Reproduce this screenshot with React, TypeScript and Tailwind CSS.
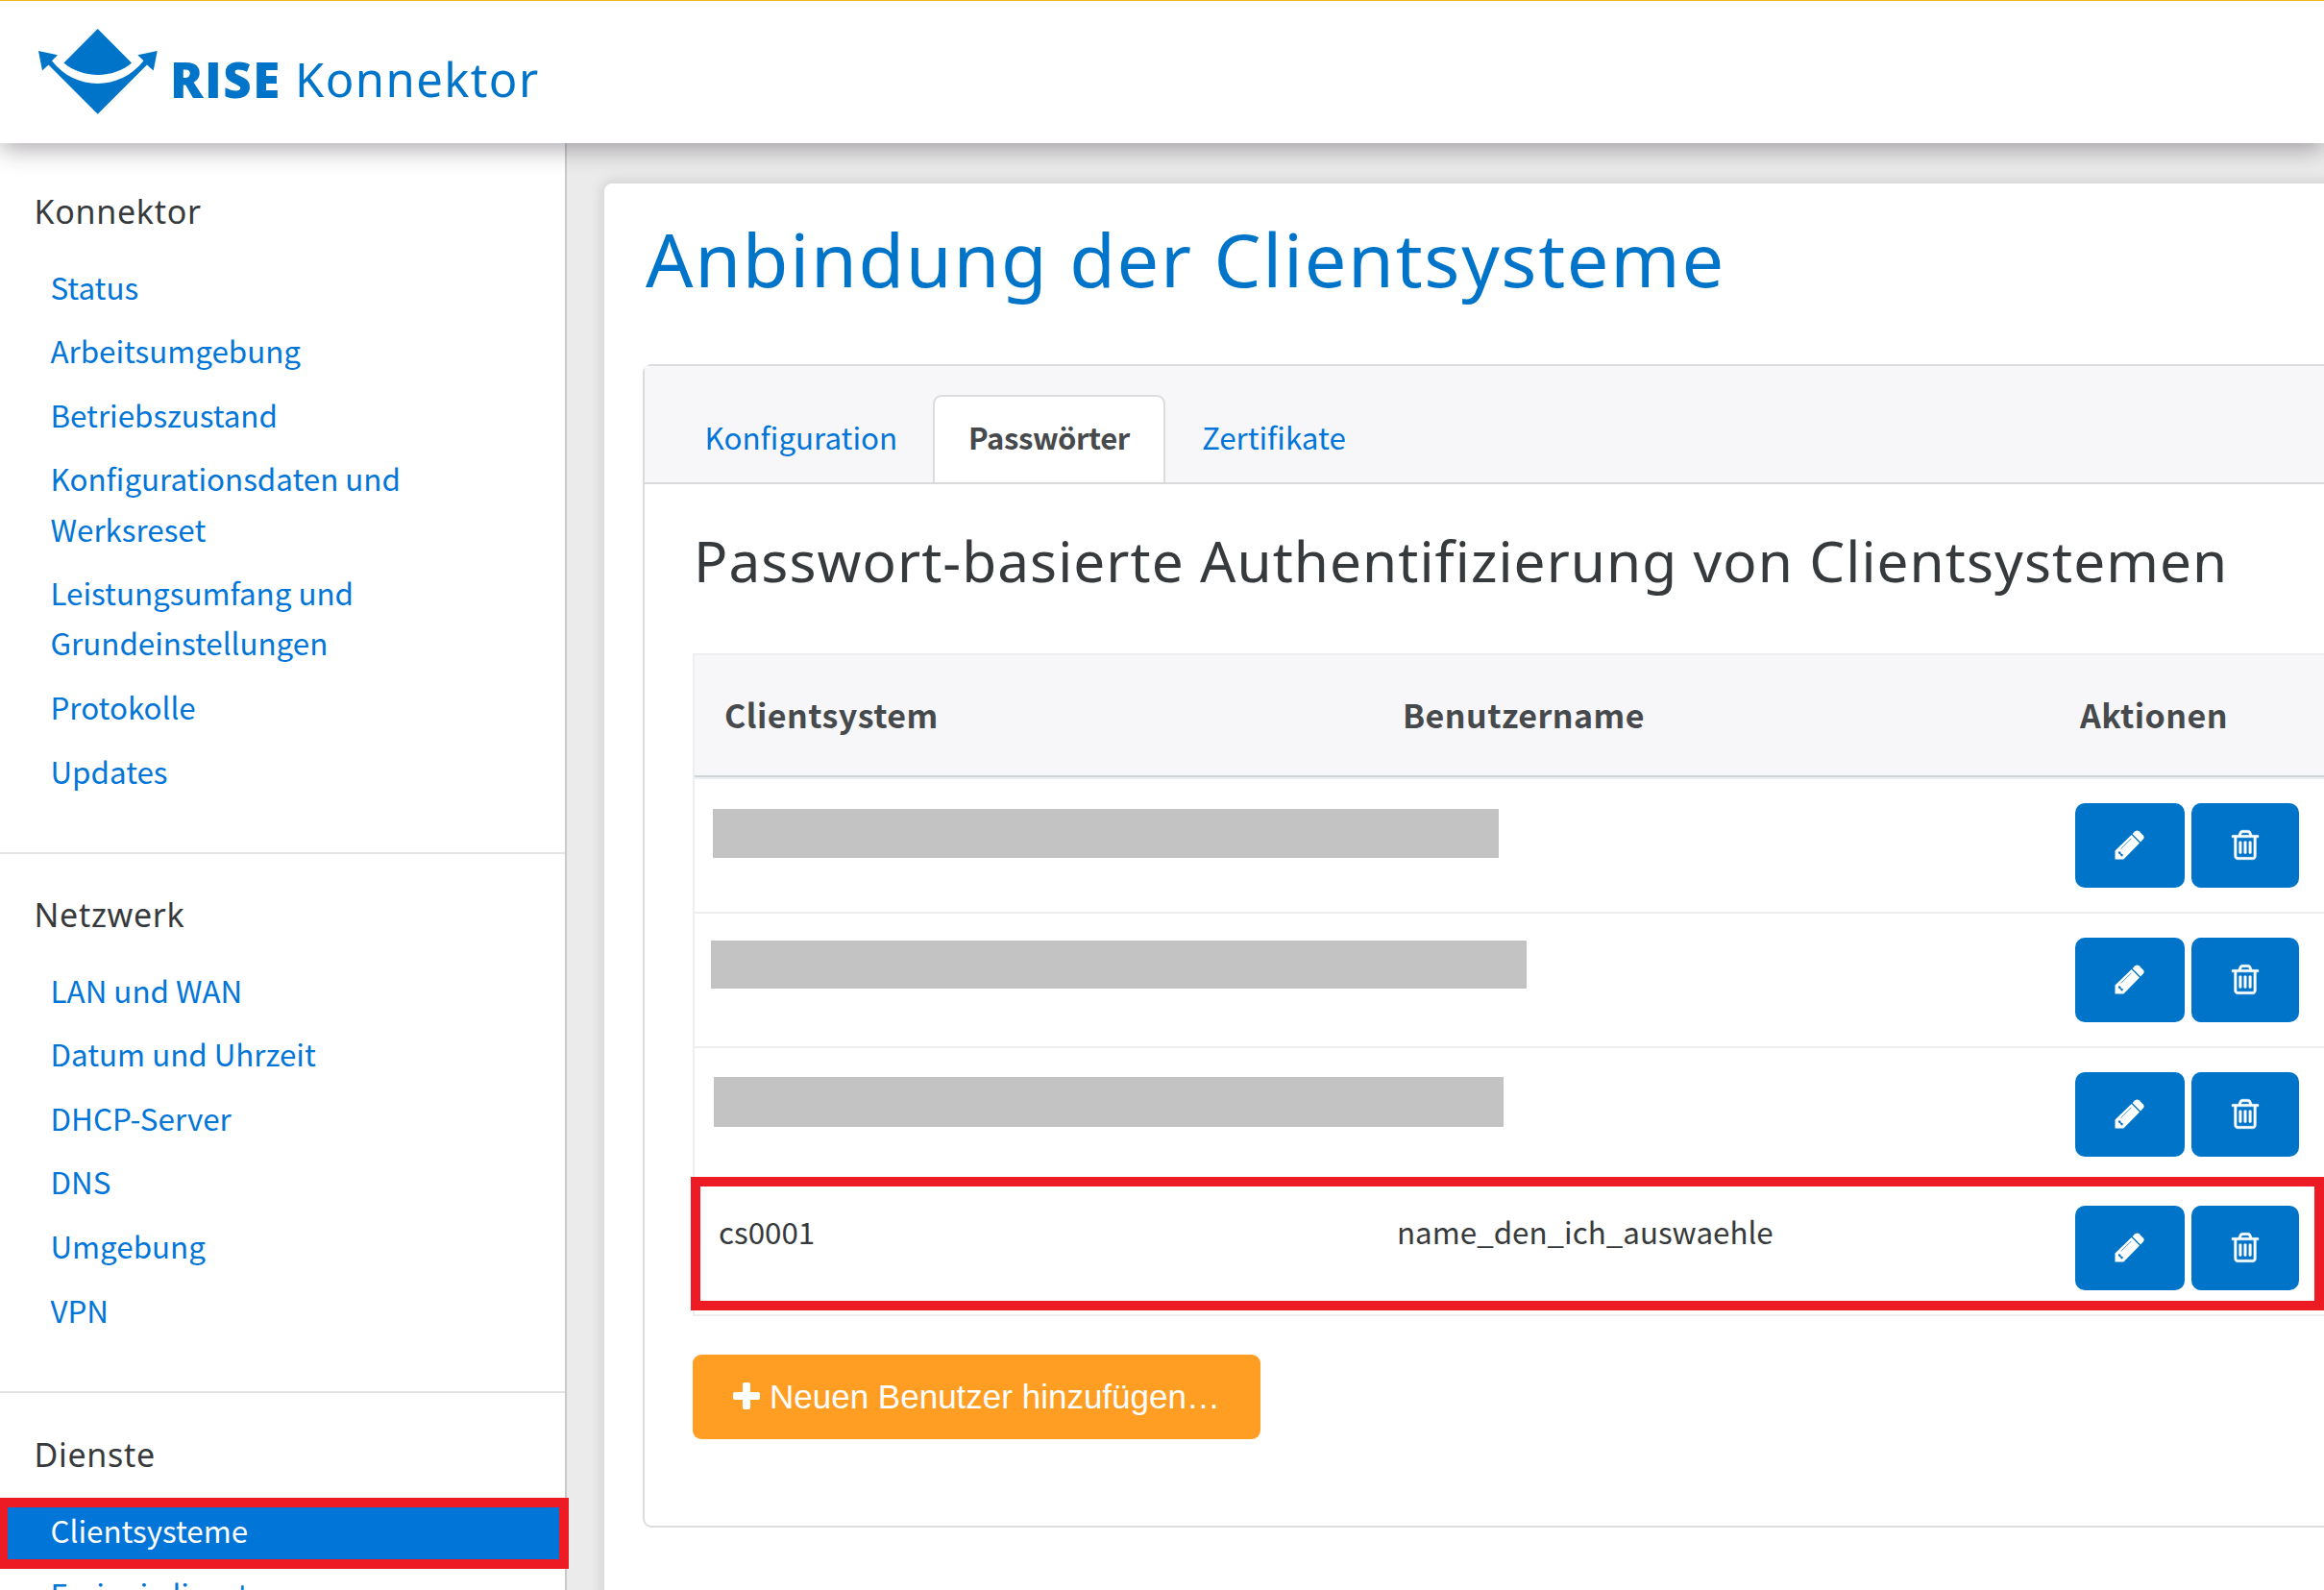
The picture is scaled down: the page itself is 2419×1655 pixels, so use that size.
import type { ReactNode } from "react";

const groups = [
  {
    title: "Konnektor",
    items: ["Status", "Arbeitsumgebung", "Betriebszustand", "Konfigurationsdaten und Werksreset", "Leistungsumfang und Grundeinstellungen", "Protokolle", "Updates"],
  },
  { title: "Netzwerk", items: ["LAN und WAN", "Datum und Uhrzeit", "DHCP-Server", "DNS", "Umgebung", "VPN"] },
  { title: "Dienste", items: ["Clientsysteme", "Ereignisdienst"] },
];

const body = "font-['Noto_Sans_CJK_SC',sans-serif]";
const round = "font-['Noto_Sans',sans-serif]";

function Logo() {
  return (
    <svg className="block h-[92px] w-[128px] shrink-0" viewBox="38 28 128 92" fill="#0074c8">
      <path d="M101.7 30 L137 65.500 C118 82 86 82 66.400 65.500 Z" />
      <path d="M40 53 L60 57.300 L54 63.300 C78 94.800 125 94.800 149.500 63.300 L143.300 57.300 L163.700 53 L159.700 73.500 L153 67.500 L101.7 118.700 L50.500 67.500 L44 73.500 Z" />
    </svg>
  );
}

function Trash() {
  return (
    <svg className="mb-[1px] h-[31px] w-[28px] overflow-visible" viewBox="0 0 1408 1536" fill="white" stroke="white" strokeWidth="20">
      <path d="M512 608v576q0 14-9 23t-23 9h-64q-14 0-23-9t-9-23V608q0-14 9-23t23-9h64q14 0 23 9t9 23zm256 0v576q0 14-9 23t-23 9h-64q-14 0-23-9t-9-23V608q0-14 9-23t23-9h64q14 0 23 9t9 23zm256 0v576q0 14-9 23t-23 9h-64q-14 0-23-9t-9-23V608q0-14 9-23t23-9h64q14 0 23 9t9 23zm128 724V384H256v948q0 22 7 40.500t14.500 27 10.500 8.500h832q3 0 10.500-8.500t14.500-27 7-40.500zM480 256h448l-48-117q-7-9-17-11H546q-10 2-17 11zm928 32v64q0 14-9 23t-23 9h-96v948q0 83-47 143.500t-113 60.500H288q-66 0-113-58.500T128 1336V384H32q-14 0-23-9t-9-23v-64q0-14 9-23t23-9h309l70-167q15-37 54-63t79-26h320q40 0 79 26t54 63l70 167h309q14 0 23 9t9 23z" />
    </svg>
  );
}

function Pencil() {
  return (
    <svg className="mb-[1px] mr-[1px] h-[31px] w-[31px]" viewBox="0 0 31 31">
      <path d="M17.600 5 L26 13.400 L9.400 30.500 H0.500 V21.500 Z" fill="white" />
      <path d="M18.600 4 L21.500 1.300 Q23.500 -0.300 25.500 1.300 L29.800 5.600 Q31.500 7.500 29.800 9.600 L27 12.400 Z" fill="white" />
      <path d="M17.500 8.700 L6.700 19.500" stroke="#0074c8" strokeWidth="0.700" fill="none" />
      <path d="M4 22.300 L6.400 22.800 L6.600 24.600 L8.800 25.300 L8.500 27 L7 27.600 L6 25.600 L4 24.300 Z" fill="#0074c8" />
    </svg>
  );
}

function Row({ children, user, height }: { children: ReactNode; user?: string; height: string }) {
  return (
    <div className={"grid grid-cols-[706px_731px_1fr] border-b-2 border-[#eceeef] " + height}>
      <div>{children}</div>
      <div className="pl-[25px] pt-[26px] text-[31.350px] leading-[52px]">{user}</div>
      <div className="flex gap-[7px] pt-[25px]">
        <button className="flex h-[88px] w-[114px] items-center justify-center rounded-[10px] bg-[#0074c8]"><Pencil /></button>
        <button className="flex h-[88px] w-[112px] items-center justify-center rounded-[10px] bg-[#0074c8]"><Trash /></button>
      </div>
    </div>
  );
}

export default function App() {
  return (
    <div className={"h-[1655px] w-[2419px] overflow-hidden bg-[#ebebeb] text-[#373a3c] " + body}>
      <header className="relative z-10 flex h-[149px] items-start border-t border-[#f0b41c] bg-white pl-[38px] shadow-[0_6px_24px_-1px_rgba(45,35,45,0.42)]">
        <div className="pt-[27px]"><Logo /></div>
        <div className="flex pl-[11px] pt-[46px] leading-[70px] text-[#0074c8]">
          <span className="w-[130px] font-['Open_Sans'] text-[51px] font-extrabold tracking-[1.500px]">RISE</span>
          <span className={"text-[49px] tracking-[1.400px] " + round}>Konnektor</span>
        </div>
      </header>
      <div className="flex">
        <aside className="h-[1506px] w-[590px] shrink-0 border-r-2 border-[#c8cacc] bg-white">
          {groups.map((g, i) => (
            <section key={g.title} className={i === 0 ? "h-[740px] border-b-2 border-[#e3e4e5] pt-[42px]" : i === 1 ? "h-[561px] border-b-2 border-[#e3e4e5] pt-[34px]" : "pt-[35px]"}>
              <h2 className={"h-[74.500px] pl-[35.500px] pt-px text-[34px] leading-[56px] tracking-[0.700px] " + round}>{g.title}</h2>
              <ul className="text-[31.350px] leading-[52.200px] text-[#0275d8]">
                {g.items.map((item) =>
                  item === "Clientsysteme" ? (
                    <li key={item} className="relative bg-[#0275d8] py-[7.200px] pl-[52.500px] text-white">
                      {item}
                      <div className="absolute -top-[0.500px] left-0 h-[74px] w-[592px] border-[10px] border-l-[8px] border-[#ed1c24]" />
                    </li>
                  ) : (
                    <li key={item} className="py-[7.200px] pl-[52.500px] pr-[120px]">{item}</li>
                  ),
                )}
              </ul>
            </section>
          ))}
        </aside>
        <main className="min-w-0 flex-1 pl-[37px] pt-[40px]">
          <div className="h-[1500px] w-[1840px] rounded-[10px] border-2 border-[#dcdcdc] bg-white pl-[40px] shadow-[0_0_14px_rgba(0,0,0,0.13)]">
            <h1 className={"h-[188px] pl-[3px] pt-[23px] text-[77.500px] leading-[110px] tracking-[1.700px] text-[#0074c8] " + round}>Anbindung der Clientsysteme</h1>
            <div className="h-[1211px] rounded-[9px] border-2 border-[#dcdcdd]">
              <div className="flex h-[123px] items-end border-b-2 border-[#d8d9da] bg-[#f7f7f9] pl-[62.500px] text-[31.350px] text-[#0275d8]">
                <span className="h-[91px] w-[237.500px] pt-[18px] leading-[52px]">Konfiguration</span>
                <span className="flex h-[91px] w-[242px] justify-center rounded-t-[9px] border-2 border-b-0 border-[#dcdcdd] bg-white pt-[16px] text-[31px] font-bold leading-[52px] tracking-[-0.400px] text-[#464a4c]">Passwörter</span>
                <span className="h-[91px] pl-[38px] pt-[18px] leading-[52px]">Zertifikate</span>
              </div>
              <div className="pl-[50px]">
                <h2 className={"h-[176px] pl-[1px] pt-[37px] text-[58.500px] leading-[84px] tracking-[1.050px] " + round}>Passwort-basierte Authentifizierung von Clientsystemen</h2>
                <div className="relative border-l-2 border-t-2 border-[#eceeef]">
                  <div className="h-[129px] border-b-2 border-[#eceeef] bg-[#f7f7f9]">
                    <div className="grid h-[127px] grid-cols-[706px_705px_1fr] border-b-2 border-[#ced4d8] pl-[31px] pt-[34px] text-[34px] font-bold leading-[56px] tracking-[0.450px] text-[#464a4c]">
                      <span>Clientsystem</span>
                      <span>Benutzername</span>
                      <span>Aktionen</span>
                    </div>
                  </div>
                  <Row height="h-[140px]"><div className="ml-[19px] mt-[31px] h-[51px] w-[818px] bg-[#c3c3c3]" /></Row>
                  <Row height="h-[140px]"><div className="ml-[17px] mt-[28px] h-[50px] w-[849px] bg-[#c3c3c3]" /></Row>
                  <Row height="h-[139px]"><div className="ml-[20px] mt-[30px] h-[52px] w-[822px] bg-[#c3c3c3]" /></Row>
                  <Row height="h-[140px]" user="name_den_ich_auswaehle"><div className="pl-[25px] pt-[26px] text-[31.350px] leading-[52px]">cs0001</div></Row>
                  <div className="absolute -left-[4px] bottom-[6px] h-[139px] w-[1700px] border-[10px] border-[#ed1c24]" />
                </div>
                <button className="mt-[40px] flex h-[88px] w-[591px] items-center rounded-[9px] bg-[#ff9e22] pl-[42px] font-['Liberation_Sans',sans-serif] text-[35px] text-white">
                  <svg className="mb-[3px] mr-[10px] h-[28px] w-[28px]" viewBox="0 0 28 28" fill="white">
                    <path d="M12 0h4q2 0 2 2v8h8q2 0 2 2v4q0 2-2 2h-8v8q0 2-2 2h-4q-2 0-2-2v-8H2q-2 0-2-2v-4q0-2 2-2h8V2q0-2 2-2z" />
                  </svg>
                  <span className="pt-[1px]">Neuen Benutzer hinzufügen…</span>
                </button>
              </div>
            </div>
          </div>
        </main>
      </div>
    </div>
  );
}
